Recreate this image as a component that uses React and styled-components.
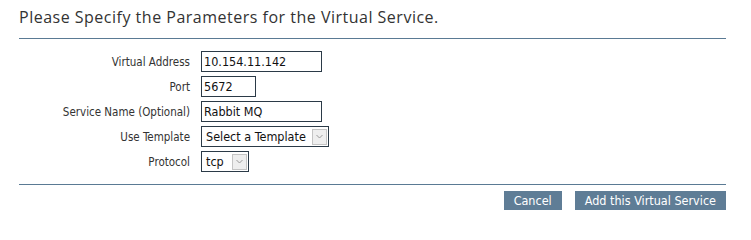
import React from "react";
import styled, { createGlobalStyle } from "styled-components";

const GlobalStyle = createGlobalStyle`
  body {
    margin: 0;
    background: #fff;
    font-family: Tahoma, "DejaVu Sans Condensed", "DejaVu Sans", sans-serif;
  }
`;

const Page = styled.div`
  width: 707px;
  padding: 6px 0 0 19px;
`;

const Heading = styled.h1`
  margin: 0;
  font-family: "Open Sans", "Noto Sans", sans-serif;
  font-weight: normal;
  font-size: 16px;
  letter-spacing: 0.5px;
  line-height: 22px;
  color: #333;
  padding-bottom: 10px;
  border-bottom: 1px solid #5a7a94;
`;

const Form = styled.div`
  display: grid;
  grid-template-columns: 171px auto;
  column-gap: 11px;
  row-gap: 4px;
  align-items: center;
  justify-items: start;
  padding: 12px 0 12px;
  border-bottom: 1px solid #5a7a94;
`;

const Label = styled.label`
  justify-self: end;
  font-family: "DejaVu Sans Condensed", "DejaVu Sans", sans-serif;
  font-size: 11.5px;
  color: #333;
`;

const TextInput = styled.input`
  box-sizing: border-box;
  width: ${({ $w }) => $w}px;
  height: 21px;
  margin: 0;
  padding: 0 2px;
  border: 1px solid #2b3a47;
  font-family: Tahoma, "DejaVu Sans Condensed", sans-serif;
  font-size: 12.5px;
  color: #111;
  outline: none;
`;

const SelectBox = styled.div`
  box-sizing: border-box;
  display: flex;
  align-items: center;
  width: ${({ $w }) => $w}px;
  height: 21px;
  border: 1px solid #2b3a47;
  padding: 0 1px 0 0;
`;

const SelectText = styled.span`
  flex: 1;
  padding-left: 4px;
  font-family: Tahoma, "DejaVu Sans Condensed", sans-serif;
  font-size: 12.5px;
  color: #111;
  white-space: nowrap;
  overflow: hidden;
`;

const ArrowBox = styled.span`
  box-sizing: border-box;
  display: flex;
  align-items: center;
  justify-content: center;
  width: 15px;
  height: 16px;
  background: #eeeeee;
  border: 1px solid #c4c4c4;
`;

const Actions = styled.div`
  display: flex;
  justify-content: flex-end;
  gap: 13px;
  padding-top: 6px;
`;

const Button = styled.button`
  height: 19px;
  margin: 0;
  padding: 0 10px;
  border: none;
  background: #5f7d96;
  color: #fff;
  font-family: Tahoma, "DejaVu Sans Condensed", sans-serif;
  font-size: 12.5px;
  line-height: 19px;
`;

const Chevron = () => (
  <svg width="7" height="5" viewBox="0 0 7 5">
    <path d="M0.5 1 L3.5 4 L6.5 1" fill="none" stroke="#999" strokeWidth="1" />
  </svg>
);

const Select = ({ width, value }) => (
  <SelectBox $w={width}>
    <SelectText>{value}</SelectText>
    <ArrowBox>
      <Chevron />
    </ArrowBox>
  </SelectBox>
);

export default function App() {
  return (
    <Page>
      <GlobalStyle />
      <Heading>Please Specify the Parameters for the Virtual Service.</Heading>
      <Form>
        <Label>Virtual Address</Label>
        <TextInput $w={121} defaultValue="10.154.11.142" />
        <Label>Port</Label>
        <TextInput $w={55} defaultValue="5672" />
        <Label>Service Name (Optional)</Label>
        <TextInput $w={121} defaultValue="Rabbit MQ" />
        <Label>Use Template</Label>
        <Select width={128} value="Select a Template" />
        <Label>Protocol</Label>
        <Select width={48} value="tcp" />
      </Form>
      <Actions>
        <Button>Cancel</Button>
        <Button>Add this Virtual Service</Button>
      </Actions>
    </Page>
  );
}
